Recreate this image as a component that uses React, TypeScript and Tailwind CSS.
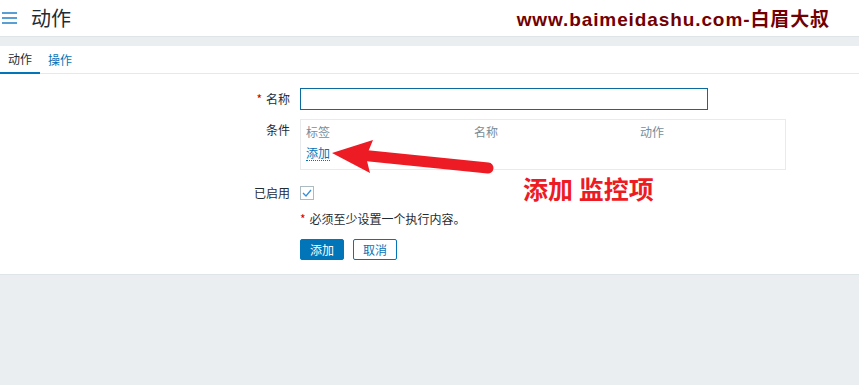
import React from "react";

const font = { fontFamily: '"Noto Sans CJK SC", "Liberation Sans", sans-serif' };

function Arrow() {
  return (
    <svg className="absolute left-0 top-0 pointer-events-none" width="859" height="385">
      <line x1="360" y1="155" x2="488" y2="168" stroke="#ed1c24" strokeWidth="11" strokeLinecap="round" />
      <polygon points="332,153 373,140 366,157 370,173" fill="#ed1c24" />
    </svg>
  );
}

export default function App() {
  return (
    <div className="relative w-[859px] h-[385px] bg-[#ebeef0] overflow-hidden text-[12px] text-[#1f2c33]" style={font}>
      <header className="h-9 bg-white flex items-center">
        <div className="ml-[2px] w-[15px] flex flex-col gap-[3px]">
          <span className="h-[2px] bg-[#5a9fd4]" />
          <span className="h-[2px] bg-[#5a9fd4]" />
          <span className="h-[2px] bg-[#5a9fd4]" />
        </div>
        <h1 className="ml-[14px] text-[20px] leading-none font-normal">动作</h1>
        <div className="ml-auto mr-[29px] mt-[4px] text-[19px] font-bold text-[#730000] tracking-[0.9px]" style={{ fontFamily: '"Liberation Sans", "Noto Sans CJK SC", sans-serif' }}>
          www.baimeidashu.com-白眉大叔
        </div>
      </header>
      <div className="h-[10px] border-t border-[#dfe4e7]" />
      <div className="bg-white">
        <nav className="h-[28px] flex border-b border-[#e6e9eb]">
          <div className="w-10 flex items-center justify-center border-b-2 border-[#0275b8] -mb-px">动作</div>
          <div className="w-10 flex items-center justify-center text-[#0275b8]">操作</div>
        </nav>
        <div className="pt-[14px] pb-[14px] grid grid-cols-[290px_1fr] gap-x-[10px] items-start">
          <label className="text-right h-[22px] leading-[22px]"><span className="text-[#d40000] mr-1">*</span>名称</label>
          <input className="w-[408px] h-[22px] border border-[#0b6a9e] outline-none" />

          <label className="text-right mt-[9px] leading-[22px]">条件</label>
          <div className="mt-[9px] w-[486px] h-[51px] border border-[#e8ebed] px-[5px] pt-[4px]">
            <div className="grid grid-cols-[168px_166px_1fr] text-[#768d99] leading-[16px]">
              <span>标签</span>
              <span>名称</span>
              <span>动作</span>
            </div>
            <a className="inline-block mt-[6px] text-[#0275b8] leading-[14px] border-b border-dotted border-[#0275b8]">添加</a>
          </div>

          <label className="text-right mt-[16px] h-[14px] leading-[14px]">已启用</label>
          <div className="mt-[16px] w-[14px] h-[14px] border border-[#acbbc2] flex items-center justify-center">
            <svg width="10" height="8" viewBox="0 0 10 8"><path d="M1 4 L4 7 L9 1" fill="none" stroke="#3b8fd0" strokeWidth="1.3" /></svg>
          </div>

          <div />
          <div className="mt-[12px] leading-[14px]"><span className="text-[#d40000] mr-1">*</span>必须至少设置一个执行内容。</div>

          <div />
          <div className="mt-[13px] flex gap-[9px]">
            <button className="w-[44px] h-[21px] bg-[#0275b8] text-white rounded-[2px] border border-[#0275b8]">添加</button>
            <button className="w-[44px] h-[21px] bg-white text-[#0275b8] rounded-[2px] border border-[#0275b8]">取消</button>
          </div>
        </div>
      </div>
      <div className="border-t border-[#dfe4e7]" />
      <div className="absolute left-[523px] top-[173px] text-[25px] font-bold text-[#ed1c24] leading-[30px] whitespace-nowrap">添加 监控项</div>
      <Arrow />
    </div>
  );
}
